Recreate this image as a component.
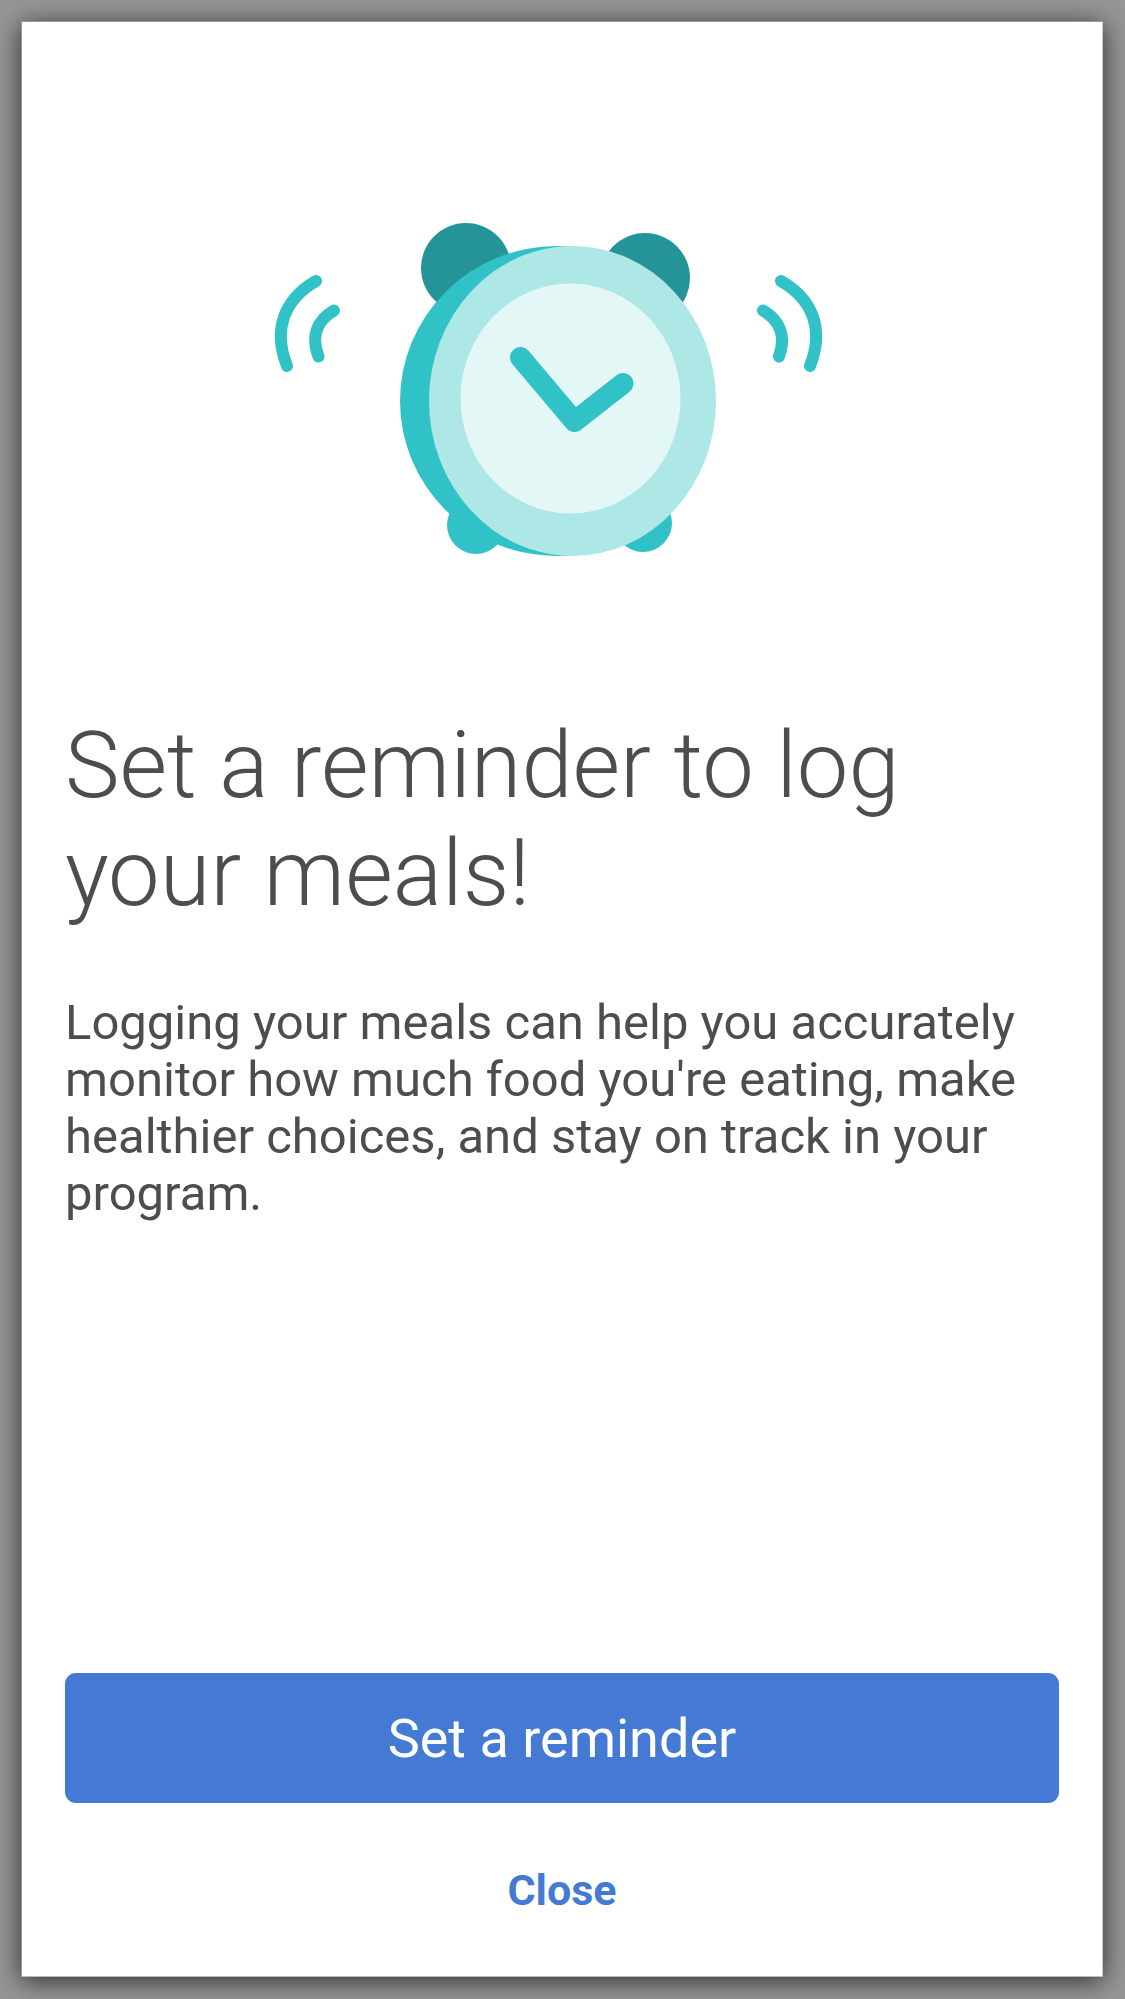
<main class="backdrop">
  <section class="sheet" aria-labelledby="title">
    <svg class="clock" viewBox="262 215 601 350" role="img" aria-label="Ringing alarm clock">
      <g fill="#259499">
        <circle cx="466" cy="268" r="45" />
        <circle cx="645" cy="278" r="45" />
      </g>
      <g fill="#30c2c6">
        <circle cx="476" cy="525" r="29" />
        <circle cx="643" cy="523" r="29" />
        <ellipse cx="557" cy="401" rx="157" ry="155" />
      </g>
      <ellipse cx="572.5" cy="401" rx="143.5" ry="155" fill="#ade8e6" />
      <ellipse cx="570.5" cy="398.5" rx="110" ry="115" fill="#e4f7f7" />
      <g class="strokes">
        <path d="M520.5 357.5L574.5 421.5L623 383.5" stroke-width="21" />
        <path d="M316 281C283 300 273 331 287 366M334 310.5C316 321 311 337 318.5 356.5M781 281C814 300 824 331 810 366M763 310.5C781 321 786 337 779 356.5" stroke-width="12" />
      </g>
    </svg>
    <h1 id="title">Set a reminder to log your meals!</h1>
    <p>Logging your meals can help you accurately monitor how much food you're eating, make healthier choices, and stay on track in your program.</p>
    <div class="actions">
      <button class="primary" type="button">Set a reminder</button>
      <button class="close" type="button">Close</button>
    </div>
  </section>
</main>

<style>
  .backdrop {
    box-sizing: border-box;
    min-height: 100vh;
    padding: 21px 22px 22px 21px;
    display: flex;
    background: #969696;
    font-family: Roboto, "Liberation Sans", sans-serif;
    color: #4d4d4d;
  }
  .sheet {
    box-sizing: border-box;
    flex: 1;
    display: flex;
    flex-direction: column;
    padding: 193px 43px 45px;
    border: 1px solid #999;
    border-right-color: #ccc;
    border-bottom-color: #bbb;
    background: #fff;
    box-shadow: 0 4px 24px rgba(0, 0, 0, 0.7);
  }
  .clock {
    width: 601px;
    max-width: 100%;
    height: 350px;
    align-self: center;
  }
  .strokes {
    fill: none;
    stroke: #30c2c6;
    stroke-linecap: round;
    stroke-linejoin: round;
  }
  h1 {
    margin: 147px 0 0;
    font-size: 92px;
    line-height: 108px;
    font-weight: 300;
  }
  p {
    margin: 66px 0 0;
    font-size: 49px;
    line-height: 57px;
  }
  .actions {
    margin-top: auto;
    display: flex;
    flex-direction: column;
    align-items: center;
    gap: 46px;
  }
  button {
    border: 0;
    font-family: inherit;
    cursor: pointer;
  }
  .primary {
    width: 100%;
    height: 130px;
    border-radius: 11px;
    background: #457ad4;
    color: #fff;
    font-size: 54px;
  }
  .close {
    padding: 16px 32px;
    background: none;
    color: #457ad4;
    font-size: 43px;
    font-weight: 700;
  }
</style>
